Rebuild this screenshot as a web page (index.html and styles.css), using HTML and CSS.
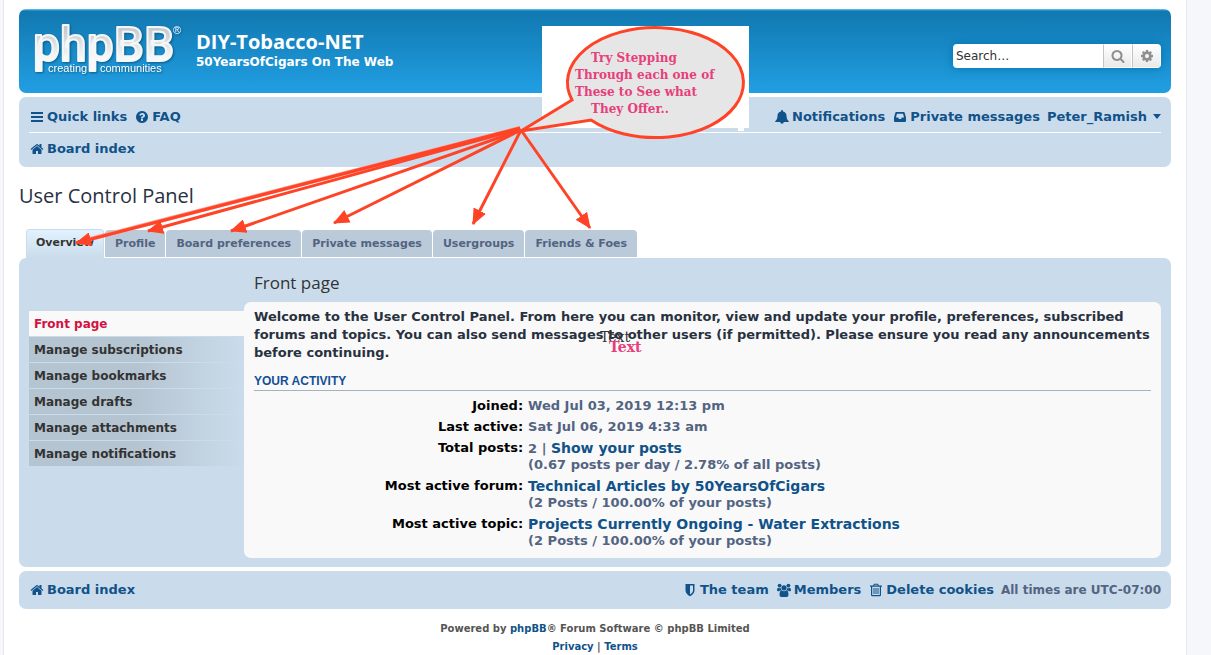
FILE: index.html
```html
<!DOCTYPE html>
<html lang="en">
<head>
  <meta charset="UTF-8" />
  <title>DIY-Tobacco-NET - User Control Panel</title>
  <link rel="stylesheet" href="styles.css">
</head>
<body>

  <!-- shared icons -->
  <svg class="sprite" aria-hidden="true">
    <symbol id="bars" viewBox="0 0 14 14"><path d="M1 2h12v2H1zM1 6h12v2H1zM1 10h12v2H1z"/></symbol>
    <symbol id="home" viewBox="0 0 1792 1792"><path d="M1472 992v480q0 26-19 45t-45 19h-384v-384h-256v384h-384q-26 0-45-19t-19-45v-480q0-1 .5-3t.5-3l575-474 575 474q1 2 1 6zm223-69l-62 74q-8 9-21 11h-3q-13 0-21-7l-692-577-692 577q-12 8-24 7-13-2-21-11l-62-74q-8-10-7-23.5t11-21.5l719-599q32-26 76-26t76 26l244 204v-195q0-14 9-23t23-9h192q14 0 23 9t9 23v408l219 182q10 8 11 21.5t-7 23.5z"/></symbol>
    <symbol id="help" viewBox="0 0 1792 1792"><path d="M1024 1376v-192q0-14-9-23t-23-9h-192q-14 0-23 9t-9 23v192q0 14 9 23t23 9h192q14 0 23-9t9-23zm256-672q0-88-55.5-163t-138.5-116-170-41q-243 0-371 213-15 24 8 42l132 100q7 6 19 6 16 0 25-12 53-68 86-92 34-24 86-24 48 0 85.5 26t37.5 59q0 38-20 61t-68 45q-63 28-115.5 86.5t-52.5 125.5v36q0 14 9 23t23 9h192q14 0 23-9t9-23q0-19 21.5-49.5t54.5-49.5q32-18 49-28.5t46-35 44.5-48 28-60.5 12.5-81zm384 192q0 209-103 385.5t-279.5 279.5-385.5 103-385.5-103-279.5-279.5-103-385.5 103-385.5 279.5-279.5 385.5-103 385.5 103 279.5 279.5 103 385.5z"/></symbol>
    <symbol id="bell" viewBox="0 0 14 14"><path d="M7 0a1 1 0 0 1 1 1v.4c2.200.4 3.500 2 3.500 4.100 0 3 .8 4.500 2.300 5.700v.8H.2v-.8C1.700 10 2.500 8.500 2.500 5.500 2.500 3.400 3.800 1.800 6 1.400V1a1 1 0 0 1 1-1zM5.200 12h3.600a1.800 1.800 0 0 1-3.600 0z"/></symbol>
    <symbol id="inbox" viewBox="0 0 14 14"><path fill-rule="evenodd" d="M3.300 2h7.400q.7 0 1 .7L13 7.500V11q0 1-1 1H2q-1 0-1-1V7.500l1.300-4.800q.3-.7 1-.7zM4 3.700 2.900 7.500h2.300l.7 1.500h2.200l.7-1.500h2.300L10 3.700z"/></symbol>
    <symbol id="search" viewBox="0 0 1792 1792"><path d="M1216 832q0-185-131.500-316.500t-316.500-131.500-316.500 131.500-131.500 316.500 131.500 316.500 316.500 131.500 316.500-131.500 131.500-316.500zm512 832q0 52-38 90t-90 38q-54 0-90-38l-343-342q-179 124-399 124-143 0-273.500-55.500t-225-150-150-225-55.500-273.500 55.500-273.500 150-225 225-150 273.500-55.500 273.500 55.500 225 150 150 225 55.500 273.500q0 220-124 399l343 343q37 37 37 90z"/></symbol>
    <symbol id="cog" viewBox="0 0 1792 1792"><path d="M1152 896q0-106-75-181t-181-75-181 75-75 181 75 181 181 75 181-75 75-181zm512-109v222q0 12-8 23t-20 13l-185 28q-19 54-39 91 35 50 107 138 10 12 10 25t-9 23q-27 37-99 108t-94 71q-12 0-26-9l-138-108q-44 23-91 38-16 136-29 186-7 28-36 28h-222q-14 0-24.500-8.500t-11.500-21.500l-28-184q-49-16-90-37l-141 107q-10 9-25 9-14 0-25-11-126-114-165-168-7-10-7-23 0-12 8-23 15-21 51-66.500t54-70.500q-27-50-41-99l-183-27q-13-2-21-12.500t-8-23.500v-222q0-12 8-23t19-13l186-28q14-46 39-92-40-57-107-138-10-12-10-24 0-10 9-23 26-36 98.500-107.500t94.500-71.500q13 0 26 10l138 107q44-23 91-38 16-136 29-186 7-28 36-28h222q14 0 24.500 8.500t11.500 21.500l28 184q49 16 90 37l142-107q9-9 24-9 13 0 25 10 129 119 165 170 7 8 7 22 0 12-8 23-15 21-51 66.500t-54 70.500q26 50 41 98l183 28q13 2 21 12.500t8 23.500z"/></symbol>
    <symbol id="shield" viewBox="0 0 14 14"><path fill-rule="evenodd" d="M2.500 1h9v6.500c0 2.500-2 4.500-4.500 5.700-2.500-1.200-4.500-3.200-4.500-5.700zM7 2.500v9c2-1.200 3-2.500 3-4v-5z"/></symbol>
    <symbol id="users" viewBox="0 0 14 14"><circle cx="2.600" cy="2.600" r="1.900"/><circle cx="11.400" cy="2.600" r="1.900"/><circle cx="7" cy="4.800" r="2.600"/><path d="M0 7.500Q0 4.800 1.200 4.800q1.300.8 2.600.2 0 1.600 1 2.500H3.500q-1 .1-1.500.8H1Q0 8.300 0 7.500zM14 7.500q0-2.700-1.200-2.700-1.300.8-2.600.2 0 1.600-1 2.500h1.300q1 .1 1.500.8h1q1 0 1-.8zM2.500 11.800q0-4.300 2.300-4.300 2.200 1.500 4.400 0 2.300 0 2.300 4.300 0 2.200-1.800 2.200H4.300q-1.800 0-1.800-2.200z"/></symbol>
    <symbol id="trash" viewBox="0 0 14 14"><path fill-rule="evenodd" d="M5 .8h4L9.800 2.500H13v1.200h-1v8.100q0 1.500-1.300 1.500H3.300Q2 13.300 2 11.800V3.700H1V2.500h3.200zM5.600 1.800l-.3.700h3.400l-.3-.7zM3.200 3.700v8.400h7.600V3.700zM4.500 5h1v6h-1zM6.500 5h1v6h-1zM8.500 5h1v6h-1z"/></symbol>
  </svg>

  <div class="wrap">
    <header class="headerbar">
      <a class="logo" href="#" aria-label="Board index">
        <svg width="150" height="60" viewBox="0 0 150 60">
          <defs>
            <linearGradient id="silver" x1="0" y1="0" x2="0" y2="1">
              <stop offset="0.200" stop-color="#c4c8cc"/>
              <stop offset="0.750" stop-color="#f8f9fa"/>
            </linearGradient>
          </defs>
          <text class="logo-name" x="-1" y="38">phpBB</text>
          <text class="logo-tag" x="14" y="49">creating</text>
          <text class="logo-tag" x="66" y="49">communities</text>
          <text class="logo-tag" x="139" y="11">®</text>
        </svg>
      </a>
      <div class="site-description">
        <h1>DIY-Tobacco-NET</h1>
        <p>50YearsOfCigars On The Web</p>
      </div>
      <form class="search-box">
        <input type="search" placeholder="Search…" aria-label="Search">
        <button type="button" aria-label="Search"><svg class="icon"><use href="#search"/></svg></button>
        <button type="button" aria-label="Advanced search"><svg class="icon"><use href="#cog"/></svg></button>
      </form>
    </header>

    <nav class="navbar">
      <ul class="nav-main">
        <li><a href="#"><svg class="icon"><use href="#bars"/></svg>Quick links</a></li>
        <li><a href="#"><svg class="icon"><use href="#help"/></svg>FAQ</a></li>
        <li class="push"><a href="#"><svg class="icon"><use href="#bell"/></svg>Notifications</a></li>
        <li><a href="#"><svg class="icon"><use href="#inbox"/></svg>Private messages</a></li>
        <li><a href="#">Peter_Ramish<span class="caret"></span></a></li>
      </ul>
      <ul class="nav-crumbs">
        <li><a href="#"><svg class="icon"><use href="#home"/></svg>Board index</a></li>
      </ul>
    </nav>

    <h2 class="page-title">User Control Panel</h2>

    <ul class="tabs">
      <li class="active"><a href="#">Overview</a></li>
      <li><a href="#">Profile</a></li>
      <li><a href="#">Board preferences</a></li>
      <li><a href="#">Private messages</a></li>
      <li><a href="#">Usergroups</a></li>
      <li><a href="#">Friends &amp; Foes</a></li>
    </ul>

    <div class="panel">
      <ul class="cp-menu">
        <li class="active"><a href="#">Front page</a></li>
        <li><a href="#">Manage subscriptions</a></li>
        <li><a href="#">Manage bookmarks</a></li>
        <li><a href="#">Manage drafts</a></li>
        <li><a href="#">Manage attachments</a></li>
        <li><a href="#">Manage notifications</a></li>
      </ul>
      <main class="cp-main">
        <h2>Front page</h2>
        <div class="content">
          <p>Welcome to the User Control Panel. From here you can monitor, view and update your profile, preferences, subscribed forums and topics. You can also send messages to other users (if permitted). Please ensure you read any announcements before continuing.</p>
          <h3>Your activity</h3>
          <dl class="details">
            <dt>Joined:</dt>
            <dd>Wed Jul 03, 2019 12:13 pm</dd>
            <dt>Last active:</dt>
            <dd>Sat Jul 06, 2019 4:33 am</dd>
            <dt>Total posts:</dt>
            <dd>2 | <a href="#">Show your posts</a><br>(0.67 posts per day / 2.78% of all posts)</dd>
            <dt>Most active forum:</dt>
            <dd><a href="#">Technical Articles by 50YearsOfCigars</a><br>(2 Posts / 100.00% of your posts)</dd>
            <dt>Most active topic:</dt>
            <dd><a href="#">Projects Currently Ongoing - Water Extractions</a><br>(2 Posts / 100.00% of your posts)</dd>
          </dl>
        </div>
      </main>
    </div>

    <ul class="footbar">
      <li><a href="#"><svg class="icon"><use href="#home"/></svg>Board index</a></li>
      <li class="push"><a href="#"><svg class="icon"><use href="#shield"/></svg>The team</a></li>
      <li><a href="#"><svg class="icon"><use href="#users"/></svg>Members</a></li>
      <li><a href="#"><svg class="icon"><use href="#trash"/></svg>Delete cookies</a></li>
      <li class="timezone">All times are UTC-07:00</li>
    </ul>

    <footer class="copyright">
      <p>Powered by <a href="#">phpBB</a>® Forum Software © phpBB Limited</p>
      <p><a href="#">Privacy</a> | <a href="#">Terms</a></p>
    </footer>
  </div>

  <!-- callout balloon and arrows drawn over the page -->
  <svg class="notes" width="1211" height="655" viewBox="0 0 1211 655">
    <defs>
      <marker id="head" markerUnits="userSpaceOnUse" markerWidth="16" markerHeight="14" refX="15" refY="7" orient="auto">
        <path d="M0 0 16 7 0 14z" fill="#ff4327"/>
      </marker>
    </defs>
    <path fill="#fff" d="M542 26h207v102h-5v3h-6v-3H542z"/>
    <path class="balloon" d="M572 100A88 55 0 1 1 591 120L521 131z"/>
    <g class="glow">
      <path d="M520 128 90 239"/>
    </g>
    <g class="arrows">
      <path d="M520 128 76 243"/>
      <path d="M520 129 148 231"/>
      <path d="M521 130 231 231"/>
      <path d="M521 130 334 223"/>
      <path d="M521 130 473 224"/>
      <path d="M521 130 590 228"/>
    </g>
    <g class="note-text">
      <text x="591" y="62">Try Stepping</text>
      <text x="575" y="79">Through each one of</text>
      <text x="575" y="96">These to See what</text>
      <text x="591" y="113">They Offer..</text>
      <text class="stray plain" x="600" y="342">Text</text>
      <text class="stray" x="609" y="352">Text</text>
    </g>
  </svg>

</body>
</html>
```
FILE: styles.css
```css
* {
  margin: 0;
  padding: 0;
  box-sizing: border-box;
}
body {
  background: #f5f7fa;
  color: #536482;
  font-family: Verdana, "DejaVu Sans", sans-serif;
  font-size: 13px;
  font-weight: bold;
  line-height: 16px;
  padding: 0 24px 0 3px;
}
ul {
  list-style: none;
}
a {
  color: #105289;
  text-decoration: none;
}
.sprite {
  display: none;
}
.icon {
  width: 14px;
  height: 14px;
  margin: 0 3px 0 1px;
  fill: currentColor;
  flex: none;
}
.wrap {
  max-width: 1184px;
  min-height: 655px;
  margin: 0 auto;
  padding: 9px 15px 0;
  background: #fff;
  border: 1px solid #e6e9ed;
  border-width: 0 1px;
}

/* header */
.headerbar {
  display: flex;
  align-items: flex-start;
  height: 84px;
  margin-bottom: 4px;
  padding: 0 10px 0 15px;
  border-radius: 7px;
  color: #fff;
  background: linear-gradient(#6aceff 0, #1178b0 2px, #219fe3 100%);
}
.logo {
  margin-top: 14px;
}
.logo svg {
  display: block;
  overflow: visible;
  filter: drop-shadow(1px 1px 1px #0a5a8a);
}
.logo-name {
  font: 500 48px Roboto, sans-serif;
  fill: url(#silver);
  stroke: #f4f6f8;
  stroke-width: 2px;
  stroke-linejoin: round;
}
.logo-tag {
  font: 11px "Liberation Sans", sans-serif;
  fill: #fff;
}
.site-description {
  padding: 21px 0 0 12px;
}
.site-description h1 {
  font: bold 20px/24px "Trebuchet MS", "Open Sans", sans-serif;
}
.site-description p {
  font-size: 12px;
}
.search-box {
  display: flex;
  margin: 35px 0 0 auto;
  border-radius: 4px;
  box-shadow: 0 0 10px #0075b0;
  overflow: hidden;
}
.search-box input {
  width: 150px;
  height: 24px;
  padding: 0 3px;
  border: 0;
  background: #fff;
  font: 12px Verdana, "DejaVu Sans", sans-serif;
}
.search-box input::placeholder {
  color: #333;
}
.search-box button {
  width: 29px;
  height: 24px;
  border: 1px solid #fff;
  border-left-color: #c7c3bf;
  background: linear-gradient(#fff, #e9e9e9);
  color: #8f8f8f;
}
.search-box .icon {
  display: block;
  margin: 0 auto;
}

/* navigation */
.navbar {
  margin-bottom: 16px;
  padding: 4px 10px 2px;
  border-radius: 7px;
  background: #cadceb;
}
.nav-main, .nav-crumbs, .footbar {
  display: flex;
  align-items: center;
  gap: 7px;
}
.nav-main, .nav-crumbs {
  height: 32px;
}
.nav-main {
  border-bottom: 1px solid #fff;
}
.nav-main a, .nav-crumbs a, .footbar a {
  display: flex;
  align-items: center;
}
.push {
  margin-left: auto;
}
.caret {
  margin-left: 6px;
  border: 4px solid transparent;
  border-top: 5px solid #105289;
  border-bottom: 0;
}
.page-title {
  color: #28313f;
  font: 20px/26px "Trebuchet MS", "Open Sans", sans-serif;
}

/* tabs */
.tabs {
  display: flex;
  align-items: flex-end;
  gap: 1px;
  height: 49px;
  padding-left: 7px;
  font-size: 11px;
}
.tabs li {
  margin-bottom: 1px;
  padding: 6px 10px 5px;
  border-radius: 4px 4px 0 0;
  background: #bacad8;
}
.tabs a {
  color: #536482;
}
.tabs .active {
  margin-bottom: 0;
  padding: 5px 9px 7px;
  border: 1px solid #cadceb;
  border-bottom: 0;
  background: linear-gradient(#e2f2ff, #cadceb);
}
.tabs .active a {
  color: #333;
}

/* control panel */
.panel {
  display: flex;
  margin-bottom: 4px;
  padding: 10px 10px 9px;
  border-radius: 7px;
  background: #cadceb;
}
.cp-menu {
  width: 215px;
  padding-top: 43px;
  font-size: 12px;
  flex: none;
}
.cp-menu li {
  margin-bottom: 1px;
  padding: 5px 5px 4px;
  background: linear-gradient(to right, #b5c4d1 50%, #cadceb);
}
.cp-menu a {
  color: #333;
}
.cp-menu .active {
  background: #f9f9f9;
}
.cp-menu .active a {
  color: #d31141;
}
.cp-main {
  flex: 1;
}
.cp-main h2 {
  padding: 3px 10px 7px;
  color: #333;
  font: 17px/24px "Trebuchet MS", "Open Sans", sans-serif;
}
.content {
  padding: 6px 10px 9px;
  border-radius: 7px;
  background: #f9f9f9;
}
.content p {
  color: #28313f;
  line-height: 18px;
}
.content h3 {
  margin: 10px 0 7px;
  border-bottom: 1px solid #a4b3bf;
  color: #115098;
  font: bold 12px/18px "Liberation Sans", sans-serif;
  text-transform: uppercase;
}
.details {
  display: grid;
  grid-template-columns: 30% 1fr;
  gap: 5px;
}
.details dt {
  color: #000;
  text-align: right;
}
.details a {
  font-size: 14px;
}

/* footer */
.footbar {
  height: 38px;
  padding: 0 10px;
  border-radius: 7px;
  background: #cadceb;
}
.timezone {
  font-size: 12px;
}
.copyright {
  padding-top: 11px;
  color: #555;
  font-size: 10px;
  line-height: 18px;
  text-align: center;
}

/* annotations */
.notes {
  position: absolute;
  left: 0;
  top: 0;
  pointer-events: none;
}
.balloon {
  fill: #e6e6e6;
  stroke: #ff4327;
  stroke-width: 3px;
}
.arrows {
  fill: none;
  stroke: #ff4327;
  stroke-width: 3px;
}
.arrows path {
  marker-end: url(#head);
}
.glow {
  fill: none;
  stroke: #ff9a8a;
  stroke-width: 4px;
}
.note-text {
  font: bold 12px "DejaVu Serif", serif;
  fill: #e83e7b;
}
.note-text .stray {
  font-size: 14px;
}
.note-text .plain {
  font-weight: normal;
  fill: #333;
}
```
